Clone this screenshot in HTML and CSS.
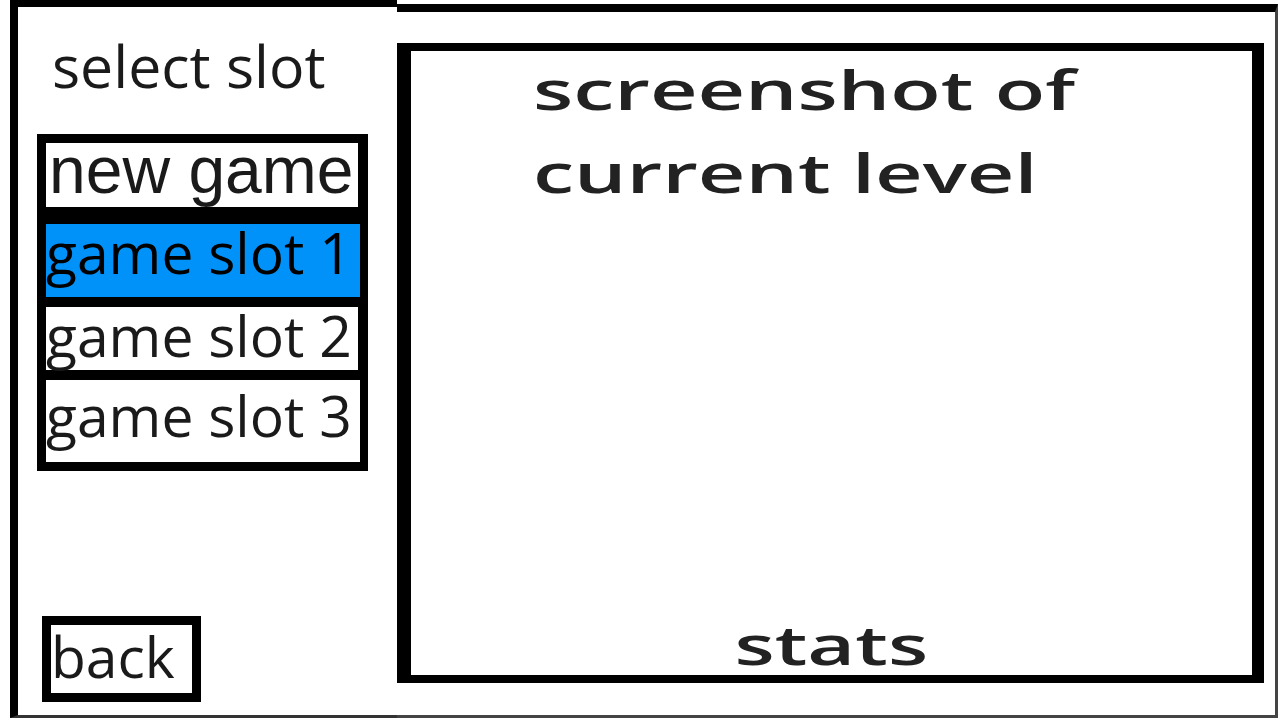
FILE: index.html
```html
<html>
<head>
    <link rel="stylesheet" href="styles.css">
</head>
<body>
    <div class="screen">
        <div class="slots-panel">
            <div class="title">select slot</div>
            <div class="slot-list">
                <div class="slot slot-new">new game</div>
                <div class="slot slot-1 selected">game slot 1</div>
                <div class="slot slot-2">game slot 2</div>
                <div class="slot slot-3">game slot 3</div>
            </div>
            <div class="back-btn">back</div>
        </div>
        <div class="preview-panel">
            <div class="preview">
                <div class="preview-title"><span>screenshot of<br>current level</span></div>
                <div class="stats"><span>stats</span></div>
            </div>
        </div>
    </div>
</body>
</html>
```

FILE: styles.css
```css
body {
    margin: 0;
    background-color: #ffffff;
    font-family: "Open Sans", sans-serif;
    color: #1a1a1a;
}
.screen {
    display: flex;
    height: 720px;
    padding-left: 10px;
    box-sizing: border-box;
}
.slots-panel {
    width: 387px;
    height: 718px;
    box-sizing: border-box;
    border-left: 8px solid #000;
    border-top: 7px solid #000;
    border-bottom: 3px solid #333;
    padding-bottom: 13px;
    display: flex;
    flex-direction: column;
    align-items: flex-start;
}
.title {
    margin: 29px 0 0 34px;
    font-size: 59px;
    line-height: 59px;
}
.slot-list {
    margin: 39px 0 0 19px;
    width: 331px;
    box-sizing: border-box;
    background-color: #000;
    padding: 9px 8px 9px 9px;
    display: flex;
    flex-direction: column;
    gap: 10px;
}
.slot {
    background-color: #fff;
    font-size: 57px;
    line-height: 57px;
    white-space: nowrap;
}
.slot-new {
    height: 64px;
    margin-bottom: 7px;
    margin-right: 2px;
    padding-left: 3px;
    font-family: "Liberation Sans", Arial, sans-serif;
    font-size: 66px;
    line-height: 54px;
}
.slot-1 {
    height: 73px;
}
.slot-2 {
    height: 63px;
    margin-right: 2px;
}
.slot-3 {
    height: 82px;
    box-sizing: border-box;
    padding-top: 7px;
}
.selected {
    background-color: #0092f9;
    color: #000;
}
.back-btn {
    margin: auto 0 0 24px;
    width: 141px;
    height: 65px;
    padding-top: 3px;
    border: 9px solid #000;
    font-size: 57px;
    line-height: 57px;
}
.preview-panel {
    width: 881px;
    height: 714px;
    margin-top: 4px;
    box-sizing: border-box;
    border-top: 8px solid #000;
    border-right: 3px solid #444;
    border-bottom: 3px solid #444;
    padding: 31px 11px 32px 0;
}
.preview {
    height: 100%;
    box-sizing: border-box;
    border: 8px solid #000;
    border-left-width: 14px;
    border-right-width: 12px;
    display: flex;
    flex-direction: column;
    padding-bottom: 4px;
}
.preview-title {
    margin-top: -3px;
    padding-left: 122px;
    font-size: 54px;
    font-weight: 600;
    line-height: 83px;
    color: #222;
}
.preview-title span,
.stats span {
    display: inline-block;
    transform: scaleX(1.53);
    transform-origin: left center;
}
.stats {
    margin-top: auto;
    text-align: center;
    font-size: 54px;
    font-weight: 600;
    line-height: 54px;
    color: #222;
}
.stats span {
    transform-origin: center center;
}
```
